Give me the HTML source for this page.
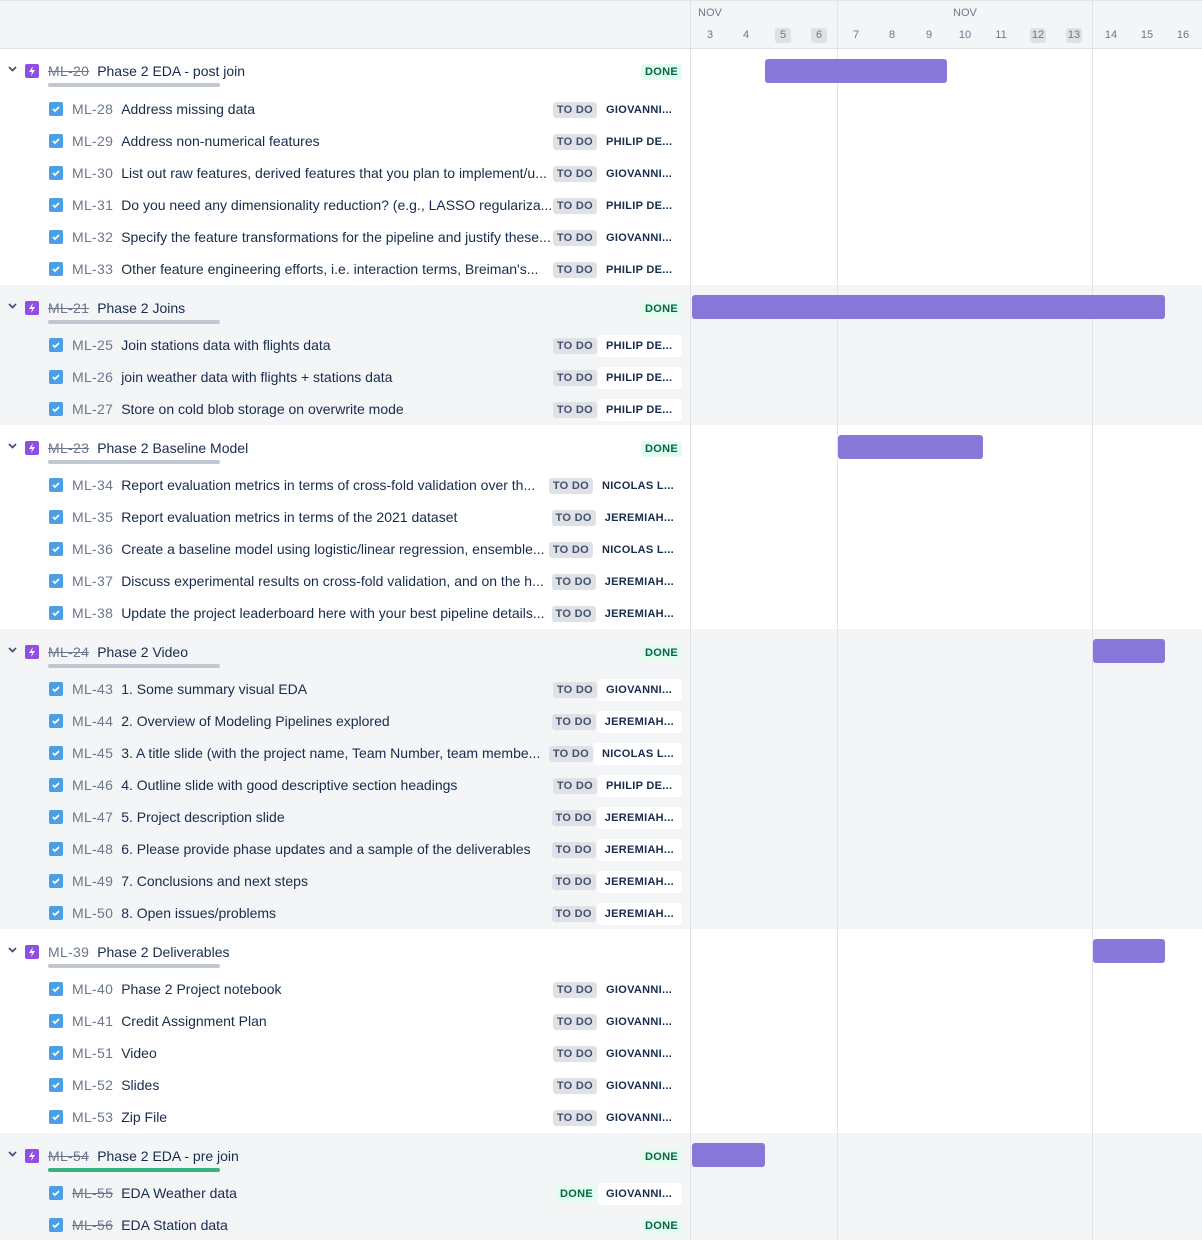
<!DOCTYPE html>
<html><head><meta charset="utf-8">
<style>
*{margin:0;padding:0;box-sizing:border-box}
body{width:1202px;height:1240px;overflow:hidden;background:#fff;font-family:"Liberation Sans",Arial,sans-serif;color:#172b4d;position:relative}
.hdr{position:absolute;left:0;top:0;width:1202px;height:49px;background:#f4f5f7;border-bottom:1px solid #dfe1e6;border-top:1px solid #e4e6ea}
.band{position:absolute;left:0;width:1202px;background:#f4f5f7}
.vl{position:absolute;top:0;width:1px;height:1240px;background:#e1e3e8}
.divider{position:absolute;left:690px;top:0;width:1px;height:1240px;background:#dfe1e6}
.nov{position:absolute;top:7px;font-size:11px;color:#6b778c}
.day{position:absolute;top:28px;width:16px;height:15px;line-height:15px;text-align:center;font-size:11px;color:#6b778c;border-radius:3px}
.day.we{background:#dfe1e6}
.bar{position:absolute;height:24px;background:#8777d9;border-radius:3px}
.row{position:absolute;left:0;width:690px;height:32px}
.row .cb{position:absolute;left:49px;top:9px;width:14px;height:14px;background:#4a9fe8;border-radius:2px}
.row .cb svg{position:absolute;left:2px;top:2px}
.k{letter-spacing:.3px}
.k b{letter-spacing:0}
.row .k{position:absolute;left:72px;top:8px;font-size:14px;color:#6b778c;white-space:nowrap}
.row .k b{font-weight:normal;color:#172b4d;margin-left:8px}
.s{text-decoration:line-through}
.rt{position:absolute;right:8px;top:8px;display:flex;align-items:center;height:18px}
.lz{font-size:11px;font-weight:bold;height:16px;line-height:16px;padding:0 4px;border-radius:3px;letter-spacing:.3px}
.todo{background:#dfe1e6;color:#42526e}
.done{background:#e3fcef;color:#006644}
.as{background:#fff;font-size:11px;font-weight:bold;color:#172b4d;height:22px;line-height:22px;padding:0 8px 0 8px;margin-left:1px;border-radius:3px;letter-spacing:.3px;min-width:84px}
.ep{position:absolute;left:0;width:690px;height:45px}
.ep .ch{position:absolute;left:8px;top:18px}
.ep .ic{position:absolute;left:25px;top:16px;width:14px;height:14px;background:#904ee2;border-radius:2px}
.ep .ic svg{position:absolute;left:3px;top:2px}
.ep .k{position:absolute;left:48px;top:15px;font-size:14px;color:#6b778c;white-space:nowrap}
.ep .k b{font-weight:normal;color:#172b4d;margin-left:8px}
.ep .pb{position:absolute;left:48px;top:35px;width:172px;height:4px;border-radius:2px;background:#c1c7d0}
.ep .rt{top:15px}
</style></head><body>
<div class="hdr"></div>
<div class="band" style="top:285px;height:140px"></div>
<div class="band" style="top:629px;height:300px"></div>
<div class="band" style="top:1133px;height:107px"></div>
<div class="divider"></div>
<div class="vl" style="left:837px"></div>
<div class="vl" style="left:1092px"></div>
<div class="nov" style="left:698px">NOV</div>
<div class="nov" style="left:953px">NOV</div>
<div class="day" style="left:702px">3</div>
<div class="day" style="left:738px">4</div>
<div class="day we" style="left:775px">5</div>
<div class="day we" style="left:811px">6</div>
<div class="day" style="left:848px">7</div>
<div class="day" style="left:884px">8</div>
<div class="day" style="left:921px">9</div>
<div class="day" style="left:957px">10</div>
<div class="day" style="left:993px">11</div>
<div class="day we" style="left:1030px">12</div>
<div class="day we" style="left:1066px">13</div>
<div class="day" style="left:1103px">14</div>
<div class="day" style="left:1139px">15</div>
<div class="day" style="left:1175px">16</div>

<div class="bar" style="left:765px;top:59px;width:182px"></div>
<div class="bar" style="left:692px;top:295px;width:473px"></div>
<div class="bar" style="left:838px;top:435px;width:145px"></div>
<div class="bar" style="left:1093px;top:639px;width:72px"></div>
<div class="bar" style="left:1093px;top:939px;width:72px"></div>
<div class="bar" style="left:692px;top:1143px;width:73px"></div>

<!-- Group 1 -->
<div class="ep" style="top:48px"><svg class="ch" width="9" height="6" viewBox="0 0 9 6"><path d="M1 1l3.5 3.5L8 1" stroke="#42526e" stroke-width="1.8" fill="none"/></svg><div class="ic"><svg width="8" height="10" viewBox="0 0 8 10"><path d="M5 0L1 6h3L3 10l4-6H4z" fill="#fff"/></svg></div><div class="k"><span class="s">ML-20</span><b>Phase 2 EDA - post join</b></div><div class="pb"></div><div class="rt"><span class="lz done">DONE</span></div></div>
<div class="row" style="top:93px"><div class="cb"><svg width="10" height="10" viewBox="0 0 10 10"><path d="M2 5l2 2 4-4" stroke="#fff" stroke-width="1.8" fill="none"/></svg></div><div class="k">ML-28<b>Address missing data</b></div><div class="rt"><span class="lz todo">TO DO</span><span class="as">GIOVANNI...</span></div></div>
<div class="row" style="top:125px"><div class="cb"><svg width="10" height="10" viewBox="0 0 10 10"><path d="M2 5l2 2 4-4" stroke="#fff" stroke-width="1.8" fill="none"/></svg></div><div class="k">ML-29<b>Address non-numerical features</b></div><div class="rt"><span class="lz todo">TO DO</span><span class="as">PHILIP DE...</span></div></div>
<div class="row" style="top:157px"><div class="cb"><svg width="10" height="10" viewBox="0 0 10 10"><path d="M2 5l2 2 4-4" stroke="#fff" stroke-width="1.8" fill="none"/></svg></div><div class="k">ML-30<b>List out raw features, derived features that you plan to implement/u...</b></div><div class="rt"><span class="lz todo">TO DO</span><span class="as">GIOVANNI...</span></div></div>
<div class="row" style="top:189px"><div class="cb"><svg width="10" height="10" viewBox="0 0 10 10"><path d="M2 5l2 2 4-4" stroke="#fff" stroke-width="1.8" fill="none"/></svg></div><div class="k">ML-31<b>Do you need any dimensionality reduction? (e.g., LASSO regulariza...</b></div><div class="rt"><span class="lz todo">TO DO</span><span class="as">PHILIP DE...</span></div></div>
<div class="row" style="top:221px"><div class="cb"><svg width="10" height="10" viewBox="0 0 10 10"><path d="M2 5l2 2 4-4" stroke="#fff" stroke-width="1.8" fill="none"/></svg></div><div class="k">ML-32<b>Specify the feature transformations for the pipeline and justify these...</b></div><div class="rt"><span class="lz todo">TO DO</span><span class="as">GIOVANNI...</span></div></div>
<div class="row" style="top:253px"><div class="cb"><svg width="10" height="10" viewBox="0 0 10 10"><path d="M2 5l2 2 4-4" stroke="#fff" stroke-width="1.8" fill="none"/></svg></div><div class="k">ML-33<b>Other feature engineering efforts, i.e. interaction terms, Breiman's...</b></div><div class="rt"><span class="lz todo">TO DO</span><span class="as">PHILIP DE...</span></div></div>

<!-- Group 2 -->
<div class="ep" style="top:285px"><svg class="ch" width="9" height="6" viewBox="0 0 9 6"><path d="M1 1l3.5 3.5L8 1" stroke="#42526e" stroke-width="1.8" fill="none"/></svg><div class="ic"><svg width="8" height="10" viewBox="0 0 8 10"><path d="M5 0L1 6h3L3 10l4-6H4z" fill="#fff"/></svg></div><div class="k"><span class="s">ML-21</span><b>Phase 2 Joins</b></div><div class="pb"></div><div class="rt"><span class="lz done">DONE</span></div></div>
<div class="row" style="top:329px"><div class="cb"><svg width="10" height="10" viewBox="0 0 10 10"><path d="M2 5l2 2 4-4" stroke="#fff" stroke-width="1.8" fill="none"/></svg></div><div class="k">ML-25<b>Join stations data with flights data</b></div><div class="rt"><span class="lz todo">TO DO</span><span class="as">PHILIP DE...</span></div></div>
<div class="row" style="top:361px"><div class="cb"><svg width="10" height="10" viewBox="0 0 10 10"><path d="M2 5l2 2 4-4" stroke="#fff" stroke-width="1.8" fill="none"/></svg></div><div class="k">ML-26<b>join weather data with flights + stations data</b></div><div class="rt"><span class="lz todo">TO DO</span><span class="as">PHILIP DE...</span></div></div>
<div class="row" style="top:393px"><div class="cb"><svg width="10" height="10" viewBox="0 0 10 10"><path d="M2 5l2 2 4-4" stroke="#fff" stroke-width="1.8" fill="none"/></svg></div><div class="k">ML-27<b>Store on cold blob storage on overwrite mode</b></div><div class="rt"><span class="lz todo">TO DO</span><span class="as">PHILIP DE...</span></div></div>

<!-- Group 3 -->
<div class="ep" style="top:425px"><svg class="ch" width="9" height="6" viewBox="0 0 9 6"><path d="M1 1l3.5 3.5L8 1" stroke="#42526e" stroke-width="1.8" fill="none"/></svg><div class="ic"><svg width="8" height="10" viewBox="0 0 8 10"><path d="M5 0L1 6h3L3 10l4-6H4z" fill="#fff"/></svg></div><div class="k"><span class="s">ML-23</span><b>Phase 2 Baseline Model</b></div><div class="pb"></div><div class="rt"><span class="lz done">DONE</span></div></div>
<div class="row" style="top:469px"><div class="cb"><svg width="10" height="10" viewBox="0 0 10 10"><path d="M2 5l2 2 4-4" stroke="#fff" stroke-width="1.8" fill="none"/></svg></div><div class="k">ML-34<b>Report evaluation metrics in terms of cross-fold validation over th...</b></div><div class="rt"><span class="lz todo">TO DO</span><span class="as">NICOLAS L...</span></div></div>
<div class="row" style="top:501px"><div class="cb"><svg width="10" height="10" viewBox="0 0 10 10"><path d="M2 5l2 2 4-4" stroke="#fff" stroke-width="1.8" fill="none"/></svg></div><div class="k">ML-35<b>Report evaluation metrics in terms of the 2021 dataset</b></div><div class="rt"><span class="lz todo">TO DO</span><span class="as">JEREMIAH...</span></div></div>
<div class="row" style="top:533px"><div class="cb"><svg width="10" height="10" viewBox="0 0 10 10"><path d="M2 5l2 2 4-4" stroke="#fff" stroke-width="1.8" fill="none"/></svg></div><div class="k">ML-36<b>Create a baseline model using logistic/linear regression, ensemble...</b></div><div class="rt"><span class="lz todo">TO DO</span><span class="as">NICOLAS L...</span></div></div>
<div class="row" style="top:565px"><div class="cb"><svg width="10" height="10" viewBox="0 0 10 10"><path d="M2 5l2 2 4-4" stroke="#fff" stroke-width="1.8" fill="none"/></svg></div><div class="k">ML-37<b>Discuss experimental results on cross-fold validation, and on the h...</b></div><div class="rt"><span class="lz todo">TO DO</span><span class="as">JEREMIAH...</span></div></div>
<div class="row" style="top:597px"><div class="cb"><svg width="10" height="10" viewBox="0 0 10 10"><path d="M2 5l2 2 4-4" stroke="#fff" stroke-width="1.8" fill="none"/></svg></div><div class="k">ML-38<b>Update the project leaderboard here with your best pipeline details...</b></div><div class="rt"><span class="lz todo">TO DO</span><span class="as">JEREMIAH...</span></div></div>

<!-- Group 4 -->
<div class="ep" style="top:629px"><svg class="ch" width="9" height="6" viewBox="0 0 9 6"><path d="M1 1l3.5 3.5L8 1" stroke="#42526e" stroke-width="1.8" fill="none"/></svg><div class="ic"><svg width="8" height="10" viewBox="0 0 8 10"><path d="M5 0L1 6h3L3 10l4-6H4z" fill="#fff"/></svg></div><div class="k"><span class="s">ML-24</span><b>Phase 2 Video</b></div><div class="pb"></div><div class="rt"><span class="lz done">DONE</span></div></div>
<div class="row" style="top:673px"><div class="cb"><svg width="10" height="10" viewBox="0 0 10 10"><path d="M2 5l2 2 4-4" stroke="#fff" stroke-width="1.8" fill="none"/></svg></div><div class="k">ML-43<b>1. Some summary visual EDA</b></div><div class="rt"><span class="lz todo">TO DO</span><span class="as">GIOVANNI...</span></div></div>
<div class="row" style="top:705px"><div class="cb"><svg width="10" height="10" viewBox="0 0 10 10"><path d="M2 5l2 2 4-4" stroke="#fff" stroke-width="1.8" fill="none"/></svg></div><div class="k">ML-44<b>2. Overview of Modeling Pipelines explored</b></div><div class="rt"><span class="lz todo">TO DO</span><span class="as">JEREMIAH...</span></div></div>
<div class="row" style="top:737px"><div class="cb"><svg width="10" height="10" viewBox="0 0 10 10"><path d="M2 5l2 2 4-4" stroke="#fff" stroke-width="1.8" fill="none"/></svg></div><div class="k">ML-45<b>3. A title slide (with the project name, Team Number, team membe...</b></div><div class="rt"><span class="lz todo">TO DO</span><span class="as">NICOLAS L...</span></div></div>
<div class="row" style="top:769px"><div class="cb"><svg width="10" height="10" viewBox="0 0 10 10"><path d="M2 5l2 2 4-4" stroke="#fff" stroke-width="1.8" fill="none"/></svg></div><div class="k">ML-46<b>4. Outline slide with good descriptive section headings</b></div><div class="rt"><span class="lz todo">TO DO</span><span class="as">PHILIP DE...</span></div></div>
<div class="row" style="top:801px"><div class="cb"><svg width="10" height="10" viewBox="0 0 10 10"><path d="M2 5l2 2 4-4" stroke="#fff" stroke-width="1.8" fill="none"/></svg></div><div class="k">ML-47<b>5. Project description slide</b></div><div class="rt"><span class="lz todo">TO DO</span><span class="as">JEREMIAH...</span></div></div>
<div class="row" style="top:833px"><div class="cb"><svg width="10" height="10" viewBox="0 0 10 10"><path d="M2 5l2 2 4-4" stroke="#fff" stroke-width="1.8" fill="none"/></svg></div><div class="k">ML-48<b>6. Please provide phase updates and a sample of the deliverables</b></div><div class="rt"><span class="lz todo">TO DO</span><span class="as">JEREMIAH...</span></div></div>
<div class="row" style="top:865px"><div class="cb"><svg width="10" height="10" viewBox="0 0 10 10"><path d="M2 5l2 2 4-4" stroke="#fff" stroke-width="1.8" fill="none"/></svg></div><div class="k">ML-49<b>7. Conclusions and next steps</b></div><div class="rt"><span class="lz todo">TO DO</span><span class="as">JEREMIAH...</span></div></div>
<div class="row" style="top:897px"><div class="cb"><svg width="10" height="10" viewBox="0 0 10 10"><path d="M2 5l2 2 4-4" stroke="#fff" stroke-width="1.8" fill="none"/></svg></div><div class="k">ML-50<b>8. Open issues/problems</b></div><div class="rt"><span class="lz todo">TO DO</span><span class="as">JEREMIAH...</span></div></div>

<!-- Group 5 -->
<div class="ep" style="top:929px"><svg class="ch" width="9" height="6" viewBox="0 0 9 6"><path d="M1 1l3.5 3.5L8 1" stroke="#42526e" stroke-width="1.8" fill="none"/></svg><div class="ic"><svg width="8" height="10" viewBox="0 0 8 10"><path d="M5 0L1 6h3L3 10l4-6H4z" fill="#fff"/></svg></div><div class="k">ML-39<b>Phase 2 Deliverables</b></div><div class="pb"></div></div>
<div class="row" style="top:973px"><div class="cb"><svg width="10" height="10" viewBox="0 0 10 10"><path d="M2 5l2 2 4-4" stroke="#fff" stroke-width="1.8" fill="none"/></svg></div><div class="k">ML-40<b>Phase 2 Project notebook</b></div><div class="rt"><span class="lz todo">TO DO</span><span class="as">GIOVANNI...</span></div></div>
<div class="row" style="top:1005px"><div class="cb"><svg width="10" height="10" viewBox="0 0 10 10"><path d="M2 5l2 2 4-4" stroke="#fff" stroke-width="1.8" fill="none"/></svg></div><div class="k">ML-41<b>Credit Assignment Plan</b></div><div class="rt"><span class="lz todo">TO DO</span><span class="as">GIOVANNI...</span></div></div>
<div class="row" style="top:1037px"><div class="cb"><svg width="10" height="10" viewBox="0 0 10 10"><path d="M2 5l2 2 4-4" stroke="#fff" stroke-width="1.8" fill="none"/></svg></div><div class="k">ML-51<b>Video</b></div><div class="rt"><span class="lz todo">TO DO</span><span class="as">GIOVANNI...</span></div></div>
<div class="row" style="top:1069px"><div class="cb"><svg width="10" height="10" viewBox="0 0 10 10"><path d="M2 5l2 2 4-4" stroke="#fff" stroke-width="1.8" fill="none"/></svg></div><div class="k">ML-52<b>Slides</b></div><div class="rt"><span class="lz todo">TO DO</span><span class="as">GIOVANNI...</span></div></div>
<div class="row" style="top:1101px"><div class="cb"><svg width="10" height="10" viewBox="0 0 10 10"><path d="M2 5l2 2 4-4" stroke="#fff" stroke-width="1.8" fill="none"/></svg></div><div class="k">ML-53<b>Zip File</b></div><div class="rt"><span class="lz todo">TO DO</span><span class="as">GIOVANNI...</span></div></div>

<!-- Group 6 -->
<div class="ep" style="top:1133px"><svg class="ch" width="9" height="6" viewBox="0 0 9 6"><path d="M1 1l3.5 3.5L8 1" stroke="#42526e" stroke-width="1.8" fill="none"/></svg><div class="ic"><svg width="8" height="10" viewBox="0 0 8 10"><path d="M5 0L1 6h3L3 10l4-6H4z" fill="#fff"/></svg></div><div class="k"><span class="s">ML-54</span><b>Phase 2 EDA - pre join</b></div><div class="pb" style="background:#36b37e"></div><div class="rt"><span class="lz done">DONE</span></div></div>
<div class="row" style="top:1177px"><div class="cb"><svg width="10" height="10" viewBox="0 0 10 10"><path d="M2 5l2 2 4-4" stroke="#fff" stroke-width="1.8" fill="none"/></svg></div><div class="k"><span class="s">ML-55</span><b>EDA Weather data</b></div><div class="rt"><span class="lz done">DONE</span><span class="as">GIOVANNI...</span></div></div>
<div class="row" style="top:1209px"><div class="cb"><svg width="10" height="10" viewBox="0 0 10 10"><path d="M2 5l2 2 4-4" stroke="#fff" stroke-width="1.8" fill="none"/></svg></div><div class="k"><span class="s">ML-56</span><b>EDA Station data</b></div><div class="rt"><span class="lz done">DONE</span></div></div>
</body></html>
